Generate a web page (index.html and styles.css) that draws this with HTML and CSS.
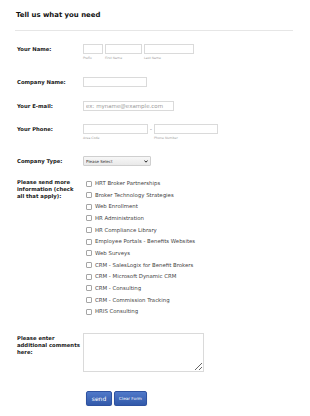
FILE: index.html
```html
<!DOCTYPE html>
<html lang="en">
<head>
    <meta charset="UTF-8">
    <meta name="viewport" content="width=device-width, initial-scale=1.0">
    <title>Tell us what you need</title>
    <link rel="stylesheet" href="styles.css">
</head>
<body>
    <form class="form-all">
        <div class="form-header">
            <h2>Tell us what you need</h2>
        </div>

        <!-- Nome -->
        <div class="form-line line-name">
            <label class="form-label">Your Name:</label>
            <div class="form-input">
                <span class="form-sub">
                    <input type="text" class="w-prefix">
                    <label>Prefix</label>
                </span>
                <span class="form-sub">
                    <input type="text" class="w-first">
                    <label>First Name</label>
                </span>
                <span class="form-sub">
                    <input type="text" class="w-last">
                    <label>Last Name</label>
                </span>
            </div>
        </div>

        <div class="form-line line-company">
            <label class="form-label">Company Name:</label>
            <div class="form-input">
                <input type="text" class="w-company">
            </div>
        </div>

        <div class="form-line line-email">
            <label class="form-label">Your E-mail:</label>
            <div class="form-input">
                <input type="email" class="w-email" placeholder="ex: myname@example.com">
            </div>
        </div>

        <div class="form-line line-phone">
            <label class="form-label">Your Phone:</label>
            <div class="form-input">
                <span class="form-sub">
                    <input type="tel" class="w-area">
                    <label>Area Code</label>
                </span>
                <span class="phone-dash">-</span>
                <span class="form-sub">
                    <input type="tel" class="w-phone">
                    <label>Phone Number</label>
                </span>
            </div>
        </div>

        <div class="form-line line-type">
            <label class="form-label">Company Type:</label>
            <div class="form-input">
                <span class="select-wrap">
                    <select class="form-dropdown">
                        <option>Please Select</option>
                        <option>Broker</option>
                        <option>Employer</option>
                        <option>Carrier</option>
                    </select>
                    <svg class="select-arrow" width="4" height="3" viewBox="0 0 4 3">
                        <path d="M0.4 0.5 L2 2.2 L3.6 0.5" fill="none" stroke="#222" stroke-width="1"/>
                    </svg>
                </span>
            </div>
        </div>

        <!-- Opcoes -->
        <div class="form-line line-info">
            <label class="form-label">Please send more information (check all that apply):</label>
            <div class="form-input checkbox-list">
                <label class="form-checkbox"><input type="checkbox">HRT Broker Partnerships</label>
                <label class="form-checkbox"><input type="checkbox">Broker Technology Strategies</label>
                <label class="form-checkbox"><input type="checkbox">Web Enrollment</label>
                <label class="form-checkbox"><input type="checkbox">HR Administration</label>
                <label class="form-checkbox"><input type="checkbox">HR Compliance Library</label>
                <label class="form-checkbox"><input type="checkbox">Employee Portals - Benefits Websites</label>
                <label class="form-checkbox"><input type="checkbox">Web Surveys</label>
                <label class="form-checkbox"><input type="checkbox">CRM - SalesLogix for Benefit Brokers</label>
                <label class="form-checkbox"><input type="checkbox">CRM - Microsoft Dynamic CRM</label>
                <label class="form-checkbox"><input type="checkbox">CRM - Consulting</label>
                <label class="form-checkbox"><input type="checkbox">CRM - Commission Tracking</label>
                <label class="form-checkbox"><input type="checkbox">HRIS Consulting</label>
            </div>
        </div>

        <div class="form-line line-comments">
            <label class="form-label">Please enter additional comments here:</label>
            <div class="form-input">
                <textarea class="form-textarea"></textarea>
            </div>
        </div>

        <div class="form-line line-buttons">
            <div class="form-buttons">
                <button type="submit" class="form-button btn-send">send</button>
                <button type="reset" class="form-button btn-clear">Clear Form</button>
            </div>
        </div>
    </form>
</body>
</html>
```

FILE: styles.css
```css
body {
    margin: 0;
    padding: 0;
    background-color: #fff;
    font-family: "DejaVu Sans", Verdana, sans-serif;
    color: #222;
}

.form-all {
    width: 278px;
    margin-left: 15px;
}

.form-header {
    border-bottom: 1px solid #e6e6e6; /* linha fina */
    padding: 11px 0 11px 1px;
}

.form-header h2 {
    margin: 0;
    font-size: 6.9px;
    line-height: 8px;
    font-weight: bold;
    color: #111;
}

.form-line {
    display: flex;
    align-items: flex-start;
}

.form-label {
    width: 68px;
    padding-left: 2px;
    padding-right: 2px;
    padding-top: 1.5px;
    box-sizing: border-box;
    flex-shrink: 0;
    font-size: 5.3px;
    line-height: 7px;
    font-weight: bold;
    color: #1a1a1a;
}

.form-input {
    display: flex;
    align-items: flex-start;
}

/* espacos entre as linhas */
.line-name { margin-top: 13px; }
.line-company { margin-top: 16.5px; }
.line-email { margin-top: 14px; }
.line-phone { margin-top: 13px; }
.line-type { margin-top: 15.5px; }
.line-info { margin-top: 11.2px; }
.line-comments { margin-top: 15.8px; }
.line-buttons { margin-top: 19px; }

.line-info .form-label { padding-top: 2.3px; }
.line-comments .form-label { padding-top: 2.5px; }

input[type="text"],
input[type="email"],
input[type="tel"] {
    height: 10px;
    box-sizing: border-box;
    border: 1px solid #dadada;
    margin: 0;
    padding: 0 2px;
    font-family: "DejaVu Sans", Verdana, sans-serif;
    font-size: 5.5px;
    background: #fff;
}

input::placeholder {
    color: #9a9a9a;
}

.form-sub {
    display: flex;
    flex-direction: column;
    margin-right: 2px;
}

.form-sub label {
    font-size: 3.2px;
    line-height: 5px;
    margin-top: 1.5px;
    color: #a0a0a0;
}

.w-prefix { width: 20px; }
.w-first { width: 37px; }
.w-last { width: 50px; }
.w-company { width: 64px; }
.w-email { width: 91px; }
.w-area { width: 65px; }
.w-phone { width: 64px; }

.phone-dash {
    width: 6px;
    margin-left: -2px;
    text-align: center;
    font-size: 5px;
    line-height: 10px;
    color: #555;
}

.select-wrap {
    position: relative;
    display: flex;
}

.form-dropdown {
    -webkit-appearance: none;
    appearance: none;
    width: 68px;
    height: 10px;
    box-sizing: border-box;
    margin: 0;
    padding: 0 2px;
    border: 1px solid #cfcfcf;
    border-radius: 1px;
    background: linear-gradient(#f7f7f7, #e9e9e9);
    font-family: "DejaVu Sans", Verdana, sans-serif;
    font-size: 4px;
    color: #333;
}

.select-arrow {
    position: absolute;
    right: 3px;
    top: 4px;
}

.checkbox-list {
    flex-direction: column;
}

.form-checkbox {
    display: flex;
    align-items: center;
    height: 11.67px;
    font-size: 5.4px;
    color: #444;
}

.form-checkbox input {
    -webkit-appearance: none;
    appearance: none;
    width: 6px;
    height: 6px;
    margin: 1px 3px 0 3px;
    border: 1px solid #a5a5a5;
    border-radius: 1px;
    background: #fff;
    box-sizing: border-box;
}

.form-textarea {
    width: 121px;
    height: 39px;
    box-sizing: border-box;
    margin: 0;
    border: 1px solid #dadada;
    font-family: "DejaVu Sans", Verdana, sans-serif;
    font-size: 5px;
}

.form-buttons {
    display: flex;
    gap: 2px;
    margin-left: 71px;
}

.form-button {
    height: 15px;
    box-sizing: border-box;
    padding: 0;
    border: 1px solid #2f52a0;
    border-radius: 2px;
    background: linear-gradient(#5079c9, #3259aa);
    color: #fff;
    font-family: "DejaVu Sans", Verdana, sans-serif;
    box-shadow: 0 1px 1px rgba(0, 0, 0, 0.25);
}

.btn-send {
    width: 26px;
    font-size: 6px;
}

.btn-clear {
    width: 33px;
    font-size: 4.2px;
}
```
